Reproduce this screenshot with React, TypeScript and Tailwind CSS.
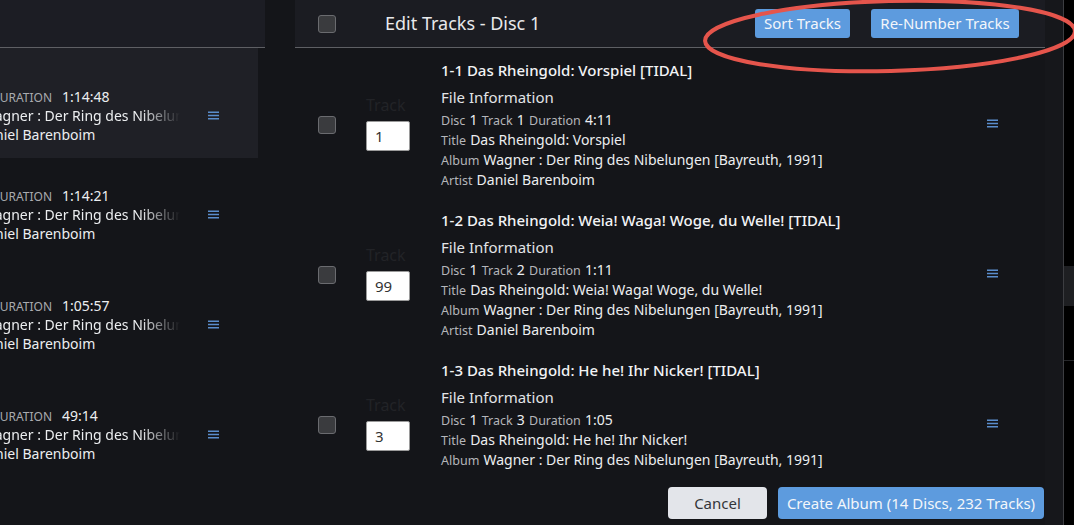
import React from 'react'

type Track = {
  code: string
  name: string
  disc: number
  track: number
  duration: string
  input: string
}

const TRACKS: Track[] = [
  { code: '1-1', name: 'Das Rheingold: Vorspiel', disc: 1, track: 1, duration: '4:11', input: '1' },
  { code: '1-2', name: 'Das Rheingold: Weia! Waga! Woge, du Welle!', disc: 1, track: 2, duration: '1:11', input: '99' },
  { code: '1-3', name: 'Das Rheingold: He he! Ihr Nicker!', disc: 1, track: 3, duration: '1:05', input: '3' },
]

const LEFT_ROWS = [
  { duration: '1:14:48', selected: true },
  { duration: '1:14:21', selected: false },
  { duration: '1:05:57', selected: false },
  { duration: '49:14', selected: false },
]

const ALBUM = 'Wagner : Der Ring des Nibelungen [Bayreuth, 1991]'

function Burger({ className = '' }: { className?: string }) {
  return (
    <svg width="11" height="9" viewBox="0 0 11 9" className={className}>
      <rect x="0" y="0.5" width="11" height="1.5" fill="#5a8dcc" />
      <rect x="0" y="3.75" width="11" height="1.5" fill="#5a8dcc" />
      <rect x="0" y="7" width="11" height="1.5" fill="#5a8dcc" />
    </svg>
  )
}

function Checkbox({ className = '' }: { className?: string }) {
  return (
    <div
      className={`h-[18px] w-[18px] shrink-0 rounded-[3px] border border-[#6a6b6f] bg-[#3a3b3e] ${className}`}
    />
  )
}

function Field({ label, value }: { label: string; value: string | number }) {
  return (
    <>
      <span className="text-[12.5px] text-[#b4b6ba]">{label}</span>{' '}
      <span className="text-[14px] text-[#eceef0]">{value}</span>
    </>
  )
}

function TrackRow({ t }: { t: Track }) {
  return (
    <div className="flex h-[150px] shrink-0 items-center pl-[23px] pr-[47px]">
      <Checkbox className="mt-[4px]" />
      <div className="ml-[30px] flex w-[44px] shrink-0 flex-col">
        <span className="h-[20px] text-[16px] leading-[20px] text-[#222327]">Track</span>
        <div className="mt-[6px] flex h-[30px] w-[44px] items-center rounded-[2px] border border-[#9a9a9a] bg-white pl-[8px] text-[15px] text-[#333]">
          {t.input}
        </div>
      </div>
      <div className="ml-[31px] flex-1 self-start pt-[12px]">
        <div className="h-[20px] text-[15px] font-medium leading-[20px] text-[#f2f3f5]">
          {t.code} {t.name} [TIDAL]
        </div>
        <div className="mt-[6px] h-[23px] text-[15px] leading-[23px] text-[#e2e4e7]">File Information</div>
        <div className="h-[20px] leading-[20px]">
          <Field label="Disc" value={t.disc} /> <Field label="Track" value={t.track} />{' '}
          <Field label="Duration" value={t.duration} />
        </div>
        <div className="h-[20px] leading-[20px]">
          <Field label="Title" value={t.name} />
        </div>
        <div className="h-[20px] leading-[20px]">
          <Field label="Album" value={ALBUM} />
        </div>
        <div className="h-[20px] leading-[20px]">
          <Field label="Artist" value="Daniel Barenboim" />
        </div>
      </div>
      <Burger className="shrink-0" />
    </div>
  )
}

export default function App() {
  return (
    <div className="relative flex h-[525px] w-[1074px] overflow-hidden bg-[#141519] font-['Noto_Sans',sans-serif]">
      {/* library list behind the dialog */}
      <div className="flex w-[265px] shrink-0 flex-col">
        <div className="h-[48px] shrink-0 border-b border-[#5e5f64] bg-[#1c1d24]" />
        {LEFT_ROWS.map((r, i) => (
          <div
            key={i}
            className={`flex h-[110px] w-[258px] shrink-0 items-center overflow-hidden ${
              r.selected ? 'bg-[#1f2026] pt-[24px]' : 'pt-[2px]'
            }`}
          >
            <div className="-ml-[26px] flex w-[217px] shrink-0 flex-col">
              <div className="h-[19px] whitespace-nowrap pl-[17px] leading-[19px]">
                <span className="text-[12px] text-[#a9abaf]">DURATION</span>
                <span className="ml-[10px] text-[14px] text-[#eceef0]">{r.duration}</span>
              </div>
              <div className="h-[19px] overflow-hidden whitespace-nowrap pl-[8px] text-[14px] leading-[19px] text-[#eceef0] [mask-image:linear-gradient(to_right,black_77%,transparent_95%)]">
                {ALBUM}
              </div>
              <div className="h-[19px] whitespace-nowrap pl-[3px] text-[14px] leading-[19px] text-[#eceef0]">
                Daniel Barenboim
              </div>
            </div>
            <Burger className="ml-[17px] shrink-0" />
          </div>
        ))}
      </div>

      {/* edit tracks dialog */}
      <div className="ml-[30px] flex w-[750px] shrink-0 flex-col">
        <div className="flex h-[48px] shrink-0 items-center border-b border-[#5e5f64] bg-[#1b1c22] pl-[23px] pr-[26px]">
          <Checkbox />
          <span className="ml-[49px] text-[18px] text-[#e8e9eb]">Edit Tracks - Disc 1</span>
          <div className="ml-auto flex gap-[21px]">
            <button className="h-[29px] w-[95px] rounded-[3px] bg-[#5d9bde] text-[15px] text-[#f3f6fa]">
              Sort Tracks
            </button>
            <button className="h-[29px] w-[148px] rounded-[3px] bg-[#5d9bde] text-[15px] text-[#f3f6fa]">
              Re-Number Tracks
            </button>
          </div>
        </div>
        <div className="flex h-[422px] shrink-0 flex-col overflow-hidden">
          {TRACKS.map((t) => (
            <TrackRow key={t.code} t={t} />
          ))}
        </div>
        <div className="flex justify-end gap-[11px] pr-[1px] pt-[17px]">
          <button className="h-[32px] w-[99px] rounded-[4px] bg-[#e3e5ea] text-[15px] text-[#34363a]">Cancel</button>
          <button className="h-[32px] w-[266px] rounded-[4px] bg-[#5d9bde] text-[15px] text-[#f3f6fa]">
            Create Album (14 Discs, 232 Tracks)
          </button>
        </div>
      </div>

      {/* page edge */}
      <div className="w-[18px] shrink-0 bg-[#16171b]" />
      <div className="flex w-[11px] shrink-0 flex-col border-l border-[#3c3d41] bg-black">
        <div className="mt-[266px] h-[40px] bg-[#1e1f22]" />
        <div className="mt-[54px] h-px bg-[#26272a]" />
      </div>

      {/* annotation */}
      <svg className="pointer-events-none absolute left-0 top-0" width="1074" height="525">
        <ellipse
          cx="890"
          cy="36"
          rx="185"
          ry="35"
          fill="none"
          stroke="#e5554c"
          strokeWidth="4"
          transform="rotate(-1.5 890 36)"
        />
      </svg>
    </div>
  )
}
